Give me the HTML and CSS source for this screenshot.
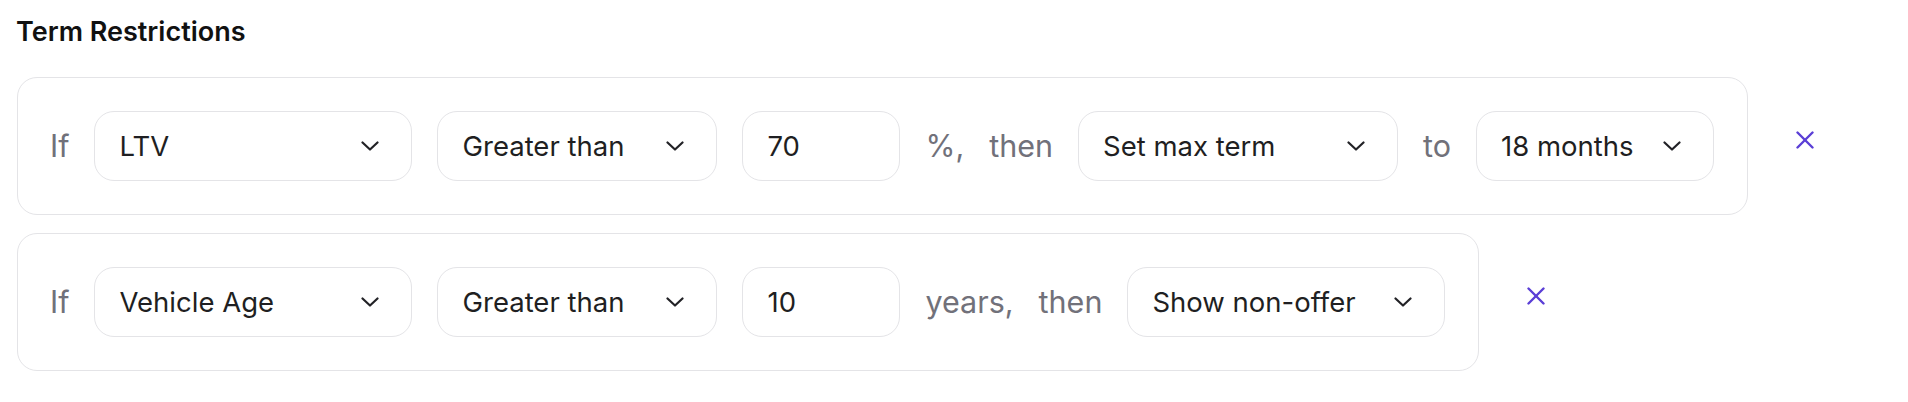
FILE: index.html
```html
<!DOCTYPE html>
<html lang="en">
<head>
<meta charset="utf-8">
<title>Term Restrictions</title>
<link rel="stylesheet" href="styles.css">
</head>
<body>
<main class="page">
  <h2 class="title">Term Restrictions</h2>
  <div class="rules">
    <div class="rule">
      <div class="rule-card">
        <span class="label">If</span>
        <div class="select select-field"><span class="select-value">LTV</span><svg class="chevron" viewBox="0 0 18 10" width="18" height="10"><polyline points="1.5,1.5 9,8.5 16.5,1.5"/></svg></div>
        <div class="select select-op"><span class="select-value">Greater than</span><svg class="chevron" viewBox="0 0 18 10" width="18" height="10"><polyline points="1.5,1.5 9,8.5 16.5,1.5"/></svg></div>
        <div class="input">70</div>
        <span class="label">%,</span>
        <span class="label">then</span>
        <div class="select select-action"><span class="select-value">Set max term</span><svg class="chevron" viewBox="0 0 18 10" width="18" height="10"><polyline points="1.5,1.5 9,8.5 16.5,1.5"/></svg></div>
        <span class="label">to</span>
        <div class="select select-term"><span class="select-value">18 months</span><svg class="chevron" viewBox="0 0 18 10" width="18" height="10"><polyline points="1.5,1.5 9,8.5 16.5,1.5"/></svg></div>
      </div>
      <button class="remove" type="button" aria-label="Remove rule"><svg viewBox="0 0 18 18" width="18" height="18"><line x1="1.5" y1="1.5" x2="16.5" y2="16.5"/><line x1="16.5" y1="1.5" x2="1.5" y2="16.5"/></svg></button>
    </div>
    <div class="rule">
      <div class="rule-card">
        <span class="label">If</span>
        <div class="select select-field"><span class="select-value">Vehicle Age</span><svg class="chevron" viewBox="0 0 18 10" width="18" height="10"><polyline points="1.5,1.5 9,8.5 16.5,1.5"/></svg></div>
        <div class="select select-op"><span class="select-value">Greater than</span><svg class="chevron" viewBox="0 0 18 10" width="18" height="10"><polyline points="1.5,1.5 9,8.5 16.5,1.5"/></svg></div>
        <div class="input">10</div>
        <span class="label">years,</span>
        <span class="label">then</span>
        <div class="select select-action-alt"><span class="select-value">Show non-offer</span><svg class="chevron" viewBox="0 0 18 10" width="18" height="10"><polyline points="1.5,1.5 9,8.5 16.5,1.5"/></svg></div>
      </div>
      <button class="remove" type="button" aria-label="Remove rule"><svg viewBox="0 0 18 18" width="18" height="18"><line x1="1.5" y1="1.5" x2="16.5" y2="16.5"/><line x1="16.5" y1="1.5" x2="1.5" y2="16.5"/></svg></button>
    </div>
  </div>
</main>
</body>
</html>
```

FILE: styles.css
```css
* { box-sizing: border-box; }

html, body {
  margin: 0;
  background: #ffffff;
}

body {
  font-family: Inter, "Noto Sans", sans-serif;
  color: #1f1f22;
}

.page {
  padding: 16px 0 0 16px;
}

.title {
  margin: 0 0 29px 0;
  font-size: 27px;
  line-height: 32px;
  font-weight: 600;
  color: #111111;
  letter-spacing: 0;
}

.rules {
  display: flex;
  flex-direction: column;
  align-items: flex-start;
  gap: 18px;
}

.rule {
  display: flex;
  align-items: center;
  gap: 48px;
}

.rule-card {
  display: flex;
  align-items: center;
  gap: 25px;
  padding: 33px 33px 33px 32px;
  border: 1px solid #e4e4e7;
  border-radius: 20px;
  margin-left: 1px;
}

.label {
  font-size: 30.5px;
  line-height: 40px;
  color: #71717a;
  white-space: nowrap;
}

.select,
.input {
  height: 70px;
  border: 1px solid #e4e4e7;
  border-radius: 20px;
  background: #fff;
  display: flex;
  align-items: center;
  font-size: 27.5px;
  color: #1f1f22;
  white-space: nowrap;
}

.select {
  justify-content: space-between;
  padding: 0 32px 0 24px;
}

.select-field { width: 318px; }
.select-op { width: 280px; }
.select-action { width: 320px; }
.select-action-alt { width: 318px; }
.select-term { width: 238px; }

.input {
  width: 158px;
  padding: 0 24px;
}

.chevron {
  flex: none;
  fill: none;
  stroke: #222226;
  stroke-width: 2.2;
  stroke-linecap: round;
  stroke-linejoin: round;
}

.remove {
  display: flex;
  padding: 0;
  margin: 0 0 12px 0;
  border: 0;
  background: none;
  cursor: pointer;
}

.remove svg {
  stroke: #5b3fd6;
  stroke-width: 2.4;
  stroke-linecap: round;
}
```
